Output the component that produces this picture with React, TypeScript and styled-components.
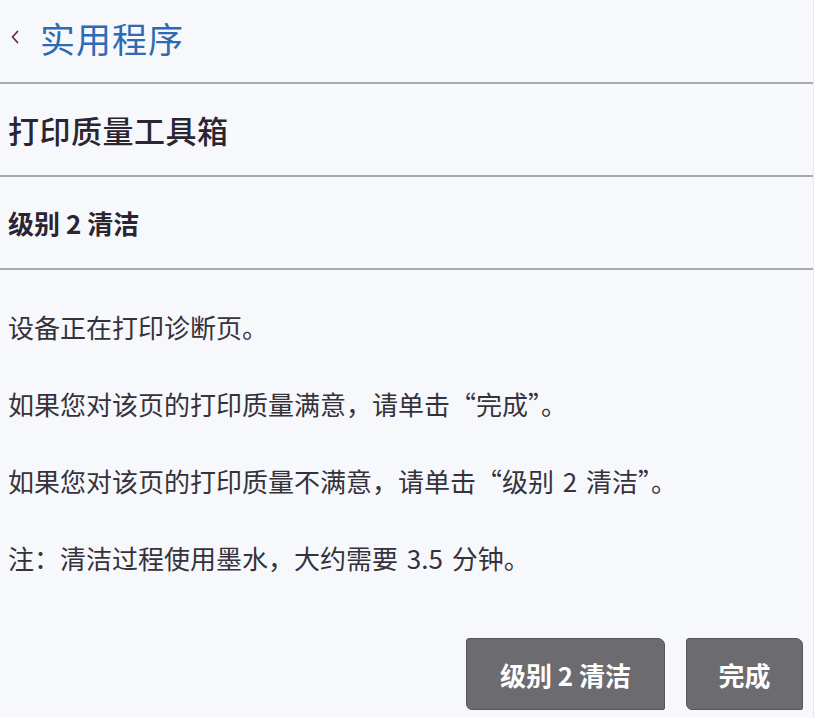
import React from 'react';
import styled, { createGlobalStyle } from 'styled-components';

const GlobalStyle = createGlobalStyle`
  html, body {
    margin: 0;
    padding: 0;
    background: #f7f8fb;
  }
  * {
    box-sizing: border-box;
  }
`;

const Page = styled.div`
  display: flex;
  flex-direction: column;
  width: 814px;
  height: 718px;
  background: #f7f8fb;
  border-right: 1px solid #e6e8ec;
  font-family: "Noto Sans CJK SC", "Noto Sans", sans-serif;
  color: #2c2831;
  overflow: hidden;
`;

const Row = styled.div<{ $height: number }>`
  display: flex;
  align-items: center;
  height: ${({ $height }) => $height}px;
  padding-left: 8px;
  border-bottom: 2px solid #a9a9b1;
  flex-shrink: 0;
`;

const BackLink = styled.div`
  display: flex;
  align-items: center;
  gap: 21px;
  padding-left: 3px;
  margin-top: -8px;
`;

const BackTitle = styled.span`
  font-size: 35px;
  color: #2d6bb3;
  letter-spacing: 1px;
`;

const Title = styled.h1`
  margin: 0;
  font-size: 31px;
  font-weight: 500;
  color: #2a2530;
  letter-spacing: 0.5px;
`;

const SubTitle = styled.h2`
  margin: 0;
  font-size: 26px;
  font-weight: 700;
  color: #2a2530;
`;

const Body = styled.div`
  display: flex;
  flex-direction: column;
  gap: 41px;
  padding: 39px 8px 0;
`;

const Para = styled.p`
  margin: 0;
  font-size: 26px;
  line-height: 36px;
  color: #36323b;
  word-spacing: 3px;
`;

const Footer = styled.div`
  display: flex;
  justify-content: flex-end;
  gap: 21px;
  margin-top: auto;
  padding: 0 10px 8px 0;
`;

const Button = styled.button<{ $width: number }>`
  width: ${({ $width }) => $width}px;
  height: 72px;
  background: #6c6c70;
  border: 1px solid #57575b;
  border-radius: 3px 7px 2px 6px;
  color: #ffffff;
  font-family: "Noto Sans CJK SC", "Noto Sans", sans-serif;
  font-size: 26px;
  font-weight: 700;
  cursor: pointer;
  padding: 0;
`;

const Chevron = () => (
  <svg width="8" height="14" viewBox="0 0 8 14">
    <polyline
      points="6.5,1.5 1.5,7 6.5,12.5"
      fill="none"
      stroke="#6a2c3c"
      strokeWidth="1.8"
      strokeLinecap="round"
      strokeLinejoin="round"
    />
  </svg>
);

const App: React.FC = () => {
  return (
    <>
      <GlobalStyle />
      <Page>
        <Row $height={84}>
          <BackLink>
            <Chevron />
            <BackTitle>实用程序</BackTitle>
          </BackLink>
        </Row>
        <Row $height={93}>
          <Title>打印质量工具箱</Title>
        </Row>
        <Row $height={93}>
          <SubTitle>级别 2 清洁</SubTitle>
        </Row>
        <Body>
          <Para>设备正在打印诊断页。</Para>
          <Para>如果您对该页的打印质量满意，请单击“完成”。</Para>
          <Para>如果您对该页的打印质量不满意，请单击“级别 2 清洁”。</Para>
          <Para>注：清洁过程使用墨水，大约需要 3.5 分钟。</Para>
        </Body>
        <Footer>
          <Button $width={199}>级别 2 清洁</Button>
          <Button $width={117}>完成</Button>
        </Footer>
      </Page>
    </>
  );
};

export default App;
